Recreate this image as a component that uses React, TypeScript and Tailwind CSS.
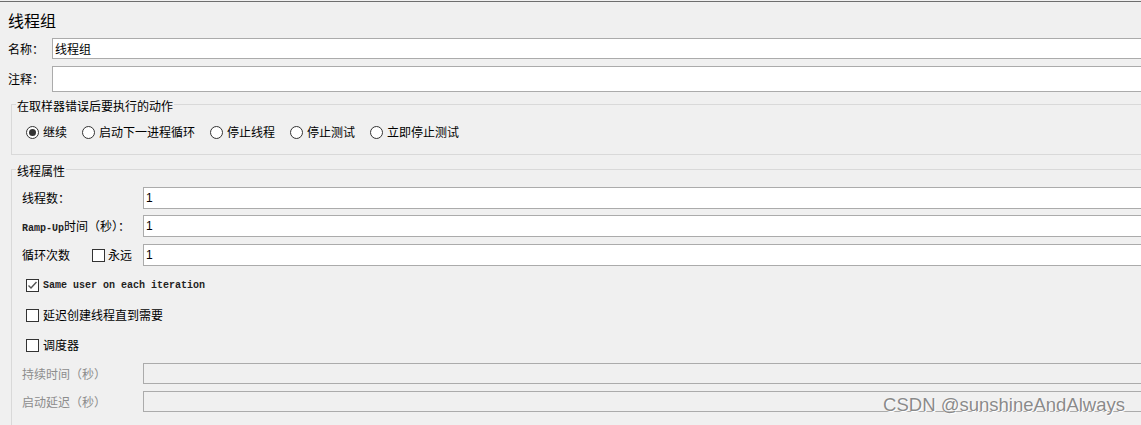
import { useState } from "react";

const cjk = "font-['Noto_Sans_CJK_SC','Noto_Sans',sans-serif]";
const mono = "font-['Liberation_Mono','Noto_Sans_CJK_SC',monospace]";

const Radio = ({ checked, label }: { checked?: boolean; label: string }) => (
  <div className="flex items-center gap-[4px]">
    <div className="w-[13px] h-[13px] rounded-full border border-[#333] bg-white flex items-center justify-center">
      {checked && <div className="w-[7px] h-[7px] rounded-full bg-[#333]" />}
    </div>
    <span className="leading-[16px]">{label}</span>
  </div>
);

const Check = ({ checked }: { checked?: boolean }) => (
  <div className="w-[13px] h-[13px] border border-[#333] bg-white flex items-center justify-center shrink-0">
    {checked && (
      <svg width="11" height="11" viewBox="0 0 11 11">
        <path d="M1.5 5.5 L4 8 L9.5 2" fill="none" stroke="#555" strokeWidth="1.4" />
      </svg>
    )}
  </div>
);

const Field = ({ value, disabled, className = "" }: { value?: string; disabled?: boolean; className?: string }) => (
  <div
    className={`flex-1 flex items-center border border-[#ababab] pl-[2px] text-[12px] font-['Liberation_Sans',sans-serif] ${
      disabled ? "bg-[#f0f0f0]" : "bg-white"
    } ${className}`}
  >
    {value}
  </div>
);

export default function App() {
  const [action] = useState("继续");
  const actions = ["继续", "启动下一进程循环", "停止线程", "停止测试", "立即停止测试"];

  return (
    <div className={`relative w-[1141px] h-[425px] overflow-hidden bg-[#f0f0f0] text-black text-[12px] ${cjk}`}>
      <div className="mt-px h-px bg-[#6e6e6e]" />
      <div className="w-[1160px] pl-[8px]">
        <div className="h-[36px] flex items-center text-[16px] pb-[1px]">线程组</div>

        <div className="flex items-center h-[21px]">
          <span className="w-[44px]">名称：</span>
          <Field value="线程组" className={`h-full ${cjk}`} />
        </div>
        <div className="flex items-center h-[26px] mt-[7px]">
          <span className="w-[44px]">注释：</span>
          <Field className="h-full" />
        </div>

        <fieldset className="mt-[3px] ml-[3px] border border-[#d9d9d9]">
          <legend className="ml-[4px] px-[1px] pt-[4px] leading-[14px]">在取样器错误后要执行的动作</legend>
          <div className="flex items-center gap-[15px] pl-[14px] pt-[11px] pb-[14px] h-[41px]">
            {actions.map(a => (
              <Radio key={a} label={a} checked={a === action} />
            ))}
          </div>
        </fieldset>

        <fieldset className="mt-[5px] ml-[3px] border border-[#d9d9d9] border-b-0 h-[300px]">
          <legend className="ml-[4px] px-[1px] pt-[4px] leading-[14px]">线程属性</legend>
          <div className="pl-[10px] pt-[9px]">
            <div className="flex items-center h-[22px]">
              <span className="w-[121px]">线程数：</span>
              <Field value="1" className="h-full" />
            </div>
            <div className="flex items-center h-[22px] mt-[6px]">
              <span className="w-[121px]">
                <span className={`${mono} text-[10px] font-bold text-[#222]`}>Ramp-Up</span>时间（秒）：
              </span>
              <Field value="1" className="h-full" />
            </div>
            <div className="flex items-center h-[22px] mt-[7px]">
              <span className="w-[70px]">循环次数</span>
              <div className="w-[51px] flex items-center gap-[3px]">
                <Check />
                <span>永远</span>
              </div>
              <Field value="1" className="h-full" />
            </div>

            <div className="mt-[4px] pl-[4px]">
              <div className="flex items-center gap-[4px] h-[30px]">
                <Check checked />
                <span className={`${mono} text-[10px] font-bold text-[#222]`}>Same user on each iteration</span>
              </div>
              <div className="flex items-center gap-[4px] h-[30px]">
                <Check />
                <span>延迟创建线程直到需要</span>
              </div>
              <div className="flex items-center gap-[4px] h-[30px]">
                <Check />
                <span>调度器</span>
              </div>
            </div>

            <div className="flex items-center h-[21px] mt-[3px] text-[#8c8c8c]">
              <span className="w-[121px]">持续时间（秒）</span>
              <Field disabled className="h-full" />
            </div>
            <div className="flex items-center h-[21px] mt-[7px] text-[#8c8c8c]">
              <span className="w-[121px]">启动延迟（秒）</span>
              <Field disabled className="h-full" />
            </div>
          </div>
        </fieldset>
      </div>

      <div className="absolute right-[16px] bottom-[9px] text-[18.5px] leading-[22px] text-[#8a8a8a] font-['Liberation_Sans',sans-serif] [text-shadow:0_0_1px_#ffffff,1px_1px_0_#ffffff]">
        CSDN @sunshineAndAlways
      </div>
    </div>
  );
}
